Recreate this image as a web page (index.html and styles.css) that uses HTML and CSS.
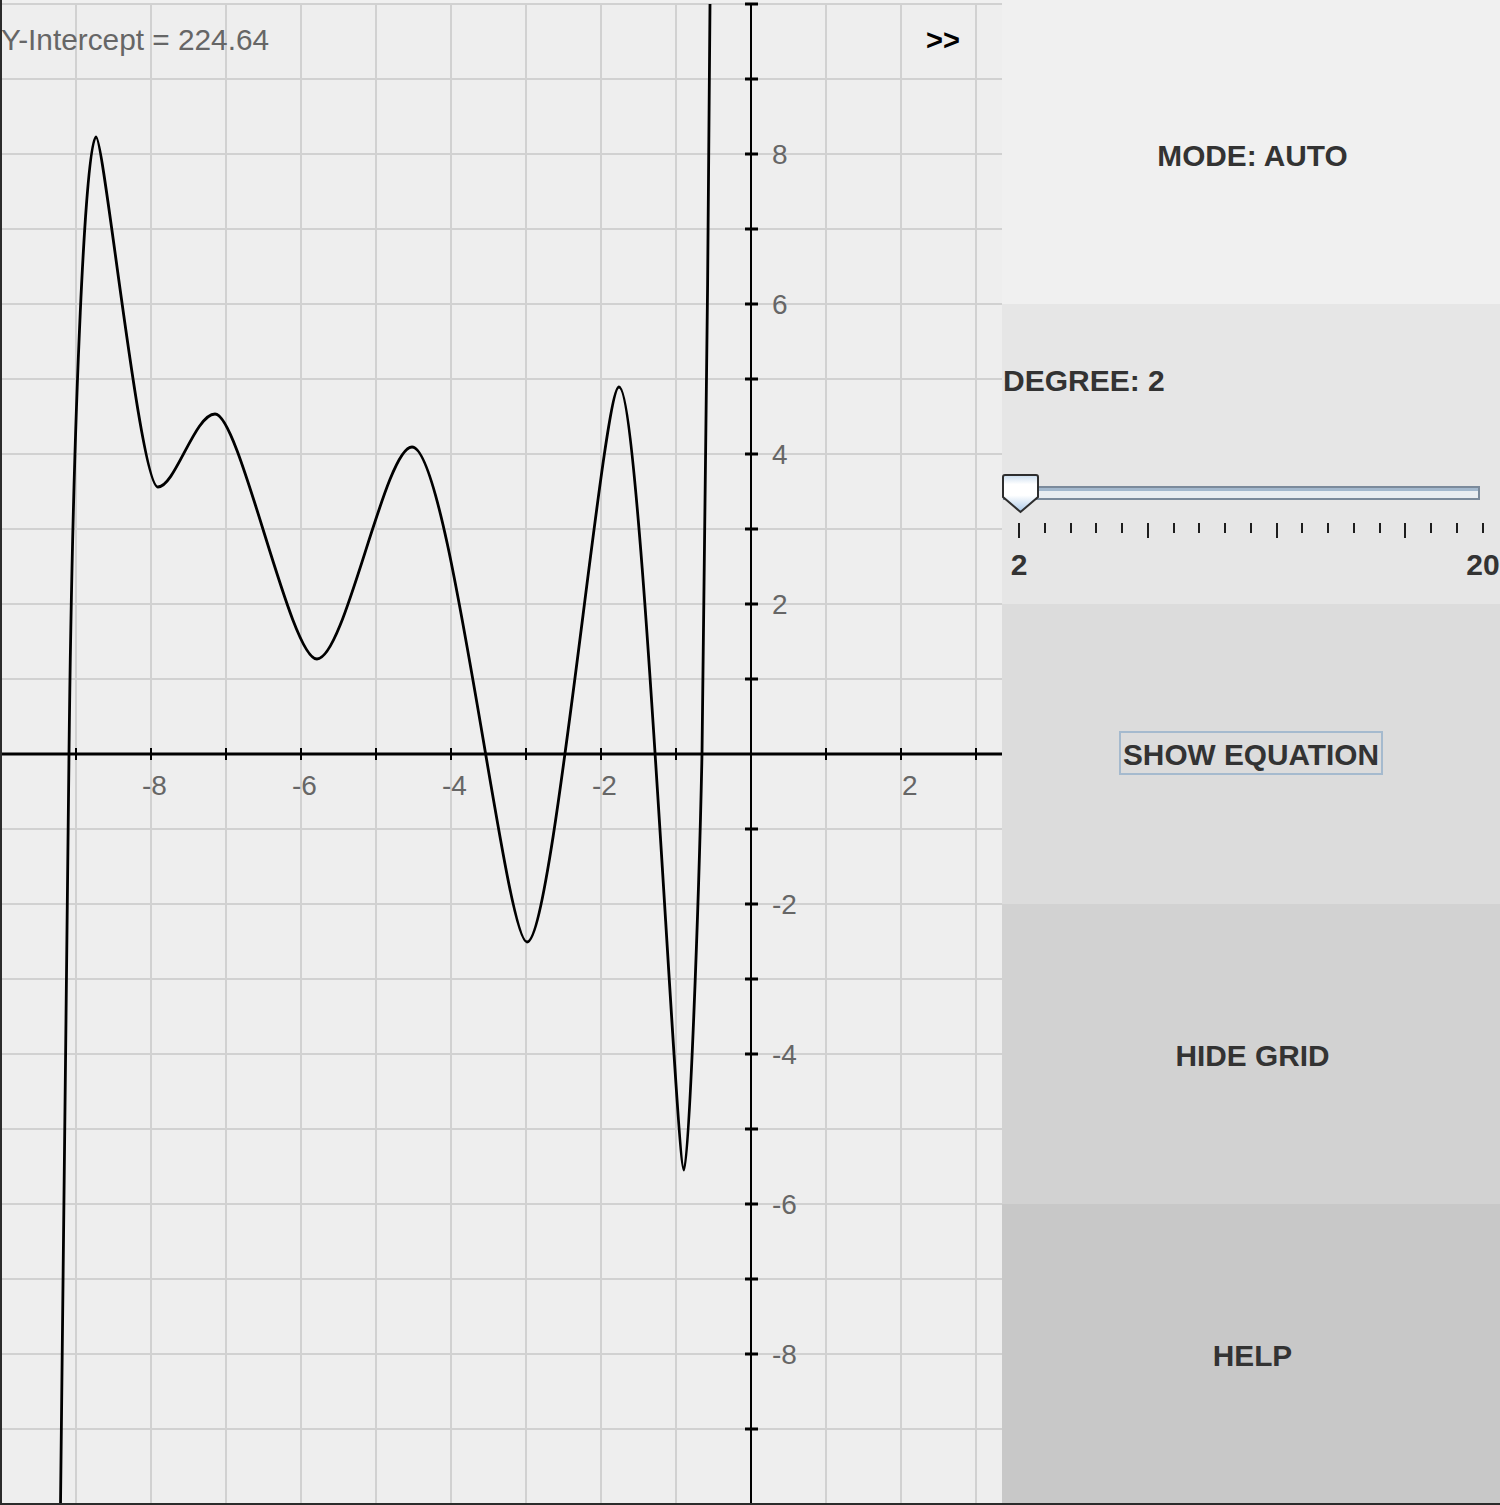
FILE: index.html
```html
<!DOCTYPE html>
<html>
<head>
<meta charset="utf-8">
<title>Polynomial Fit</title>
<link rel="stylesheet" href="styles.css">
</head>
<body>
<div class="app">
  <div class="graph">
    <svg class="plot" viewBox="2 4 1000 1499" width="1000" height="1499">
      <g class="grid">
        <line x1="1" y1="4" x2="1" y2="1505"/><line x1="76" y1="4" x2="76" y2="1505"/><line x1="151" y1="4" x2="151" y2="1505"/><line x1="226" y1="4" x2="226" y2="1505"/><line x1="301" y1="4" x2="301" y2="1505"/><line x1="376" y1="4" x2="376" y2="1505"/><line x1="451" y1="4" x2="451" y2="1505"/><line x1="526" y1="4" x2="526" y2="1505"/><line x1="601" y1="4" x2="601" y2="1505"/><line x1="676" y1="4" x2="676" y2="1505"/><line x1="826" y1="4" x2="826" y2="1505"/><line x1="901" y1="4" x2="901" y2="1505"/><line x1="976" y1="4" x2="976" y2="1505"/>
        <line x1="0" y1="4" x2="1002" y2="4"/><line x1="0" y1="79" x2="1002" y2="79"/><line x1="0" y1="154" x2="1002" y2="154"/><line x1="0" y1="229" x2="1002" y2="229"/><line x1="0" y1="304" x2="1002" y2="304"/><line x1="0" y1="379" x2="1002" y2="379"/><line x1="0" y1="454" x2="1002" y2="454"/><line x1="0" y1="529" x2="1002" y2="529"/><line x1="0" y1="604" x2="1002" y2="604"/><line x1="0" y1="679" x2="1002" y2="679"/><line x1="0" y1="829" x2="1002" y2="829"/><line x1="0" y1="904" x2="1002" y2="904"/><line x1="0" y1="979" x2="1002" y2="979"/><line x1="0" y1="1054" x2="1002" y2="1054"/><line x1="0" y1="1129" x2="1002" y2="1129"/><line x1="0" y1="1204" x2="1002" y2="1204"/><line x1="0" y1="1279" x2="1002" y2="1279"/><line x1="0" y1="1354" x2="1002" y2="1354"/><line x1="0" y1="1429" x2="1002" y2="1429"/>
      </g>
      <g class="axis">
        <line class="xaxis" x1="0" y1="754" x2="1002" y2="754"/>
        <line class="yaxis" x1="751" y1="4" x2="751" y2="1505"/>
      </g>
      <g class="yticks">
        <line x1="745" y1="4" x2="758" y2="4"/><line x1="745" y1="79" x2="758" y2="79"/><line x1="745" y1="154" x2="758" y2="154"/><line x1="745" y1="229" x2="758" y2="229"/><line x1="745" y1="304" x2="758" y2="304"/><line x1="745" y1="379" x2="758" y2="379"/><line x1="745" y1="454" x2="758" y2="454"/><line x1="745" y1="529" x2="758" y2="529"/><line x1="745" y1="604" x2="758" y2="604"/><line x1="745" y1="679" x2="758" y2="679"/><line x1="745" y1="829" x2="758" y2="829"/><line x1="745" y1="904" x2="758" y2="904"/><line x1="745" y1="979" x2="758" y2="979"/><line x1="745" y1="1054" x2="758" y2="1054"/><line x1="745" y1="1129" x2="758" y2="1129"/><line x1="745" y1="1204" x2="758" y2="1204"/><line x1="745" y1="1279" x2="758" y2="1279"/><line x1="745" y1="1354" x2="758" y2="1354"/><line x1="745" y1="1429" x2="758" y2="1429"/>
      </g>
      <g class="xticks">
        <line x1="76" y1="748" x2="76" y2="760"/><line x1="151" y1="748" x2="151" y2="760"/><line x1="226" y1="748" x2="226" y2="760"/><line x1="301" y1="748" x2="301" y2="760"/><line x1="376" y1="748" x2="376" y2="760"/><line x1="451" y1="748" x2="451" y2="760"/><line x1="526" y1="748" x2="526" y2="760"/><line x1="601" y1="748" x2="601" y2="760"/><line x1="676" y1="748" x2="676" y2="760"/><line x1="826" y1="748" x2="826" y2="760"/><line x1="901" y1="748" x2="901" y2="760"/><line x1="976" y1="748" x2="976" y2="760"/>
      </g>
      <g class="labels">
        <text x="142" y="795">-8</text>
        <text x="292" y="795">-6</text>
        <text x="442" y="795">-4</text>
        <text x="592" y="795">-2</text>
        <text x="902" y="795">2</text>
        <text x="772" y="164">8</text>
        <text x="772" y="314">6</text>
        <text x="772" y="464">4</text>
        <text x="772" y="614">2</text>
        <text x="772" y="914">-2</text>
        <text x="772" y="1064">-4</text>
        <text x="772" y="1214">-6</text>
        <text x="772" y="1364">-8</text>
      </g>
      <path class="curve" d="M 60.5,1505 L 69,754 C 73,400 86,137 96,137 C 104,137 140,487 158,487 C 175,487 195,414 215,414 C 240,414 290,659 317,659 C 345,659 385,447 412,447 C 450,447 505,942 527,942 C 553,942 603,387 619,387 C 641,387 676,1170 684,1170 C 689,1170 699,900 702,754 C 705,600 708,250 710,4"/>
      <text class="intercept" x="1" y="50">Y-Intercept = 224.64</text>
      <text class="more" x="926" y="50">&gt;&gt;</text>
    </svg>
  </div>
  <div class="side">
    <div class="sec sec-mode">MODE: AUTO</div>
    <div class="sec sec-degree">
      <div class="degree-label">DEGREE: 2</div>
      <div class="slider">
        <div class="track"></div>
        <svg class="thumb" width="40" height="41" viewBox="0 0 40 41">
          <defs>
            <linearGradient id="tg" x1="0" y1="0" x2="0" y2="1">
              <stop offset="0" stop-color="#c9dcee"/>
              <stop offset="0.25" stop-color="#ffffff"/>
              <stop offset="0.55" stop-color="#ffffff"/>
              <stop offset="1" stop-color="#a9c8e8"/>
            </linearGradient>
          </defs>
          <path d="M2,4 Q2,2 4,2 H35 Q37,2 37,4 V24 L19.5,39 L2,24 Z" fill="url(#tg)" stroke="#2e2e2e" stroke-width="2"/>
        </svg>
      </div>
      <div class="ticks">
        <span class="tick major"></span><span class="tick"></span><span class="tick"></span><span class="tick"></span><span class="tick"></span><span class="tick major"></span><span class="tick"></span><span class="tick"></span><span class="tick"></span><span class="tick"></span><span class="tick major"></span><span class="tick"></span><span class="tick"></span><span class="tick"></span><span class="tick"></span><span class="tick major"></span><span class="tick"></span><span class="tick"></span><span class="tick"></span>
      </div>
      <div class="tick-labels">
        <span class="tl"><span>2</span></span>
        <span class="tl"><span>20</span></span>
      </div>
    </div>
    <div class="sec sec-eq"><button class="eq-btn">SHOW EQUATION</button></div>
    <div class="sec sec-grid">HIDE GRID</div>
    <div class="sec sec-help">HELP</div>
  </div>
</div>
</body>
</html>
```
FILE: styles.css
```css
html, body {
  margin: 0;
  padding: 0;
  background: #f0f0f0;
}
.app {
  width: 1500px;
  height: 1505px;
  box-sizing: border-box;
  padding-top: 4px;
  border-left: 2px solid #2b2b2b;
  border-bottom: 2px solid #2b2b2b;
  display: flex;
  background: #f0f0f0;
  overflow: hidden;
}
.graph {
  width: 1000px;
  height: 1499px;
  flex: none;
  background: #eeeeee;
}
.plot {
  display: block;
  overflow: visible;
}
.grid line {
  stroke: #d1d1d1;
  stroke-width: 2;
}
.axis line {
  stroke: #000;
}
.xaxis { stroke-width: 3; }
.yaxis { stroke-width: 2; }
.yticks line {
  stroke: #000;
  stroke-width: 3;
}
.xticks line {
  stroke: #000;
  stroke-width: 2;
}
.labels text {
  font-family: "Liberation Sans", Arial, sans-serif;
  font-size: 28px;
  fill: #666666;
}
.curve {
  fill: none;
  stroke: #000;
  stroke-width: 2.8;
  stroke-linejoin: round;
}
.intercept {
  font-family: "Liberation Sans", Arial, sans-serif;
  font-size: 29.8px;
  fill: #666666;
}
.more {
  font-family: "Liberation Sans", Arial, sans-serif;
  font-size: 29px;
  font-weight: bold;
  fill: #000;
}
.side {
  width: 498px;
  flex: none;
  display: flex;
  flex-direction: column;
}
.sec {
  height: 300px;
  flex: none;
  box-sizing: border-box;
  display: flex;
  align-items: center;
  justify-content: center;
  font-family: "Liberation Sans", Arial, sans-serif;
  font-weight: bold;
  font-size: 29.8px;
  color: #333333;
  padding: 4px 0 0 3px;
}
.sec-mode { background: #f0f0f0; }
.sec-degree {
  background: #e6e6e6;
  display: block;
  padding: 62px 0 0 1px;
}
.sec-eq { background: #dcdcdc; padding: 0; }
.sec-grid { background: #d2d2d2; }
.sec-help { background: #c8c8c8; flex: 1; height: auto; }
.degree-label {
  font-size: 30px;
  line-height: 30px;
}
.slider {
  position: relative;
  height: 28px;
  margin: 78px 20px 0 0;
  padding-top: 12px;
}
.track {
  height: 10px;
  border-top: 2px solid #7b8a9b;
  border-bottom: 2px solid #7b8a9b;
  border-right: 2px solid #7b8a9b;
  background: linear-gradient(#a3b8cd 0, #a3b8cd 3px, #e9edf1 3px, #e9edf1 100%);
}
.thumb {
  position: absolute;
  left: -2px;
  top: -1px;
  display: block;
}
.ticks {
  display: flex;
  justify-content: space-between;
  align-items: flex-start;
  width: 466px;
  margin: 9px 0 0 15px;
}
.tick {
  width: 2px;
  height: 10px;
  background: #1e1e1e;
}
.tick.major {
  height: 15px;
}
.tick-labels {
  display: flex;
  justify-content: space-between;
  width: 466px;
  margin: 12px 0 0 15px;
}
.tl {
  width: 2px;
  display: flex;
  justify-content: center;
  font-size: 30px;
  line-height: 30px;
}
.eq-btn {
  font-family: "Liberation Sans", Arial, sans-serif;
  font-weight: bold;
  font-size: 29.8px;
  color: #333333;
  background: transparent;
  border: 2px solid #a5bace;
  padding: 3px 2px 0;
  height: 44px;
  line-height: 36px;
  margin-top: -2px;
  border-radius: 0;
}
```
